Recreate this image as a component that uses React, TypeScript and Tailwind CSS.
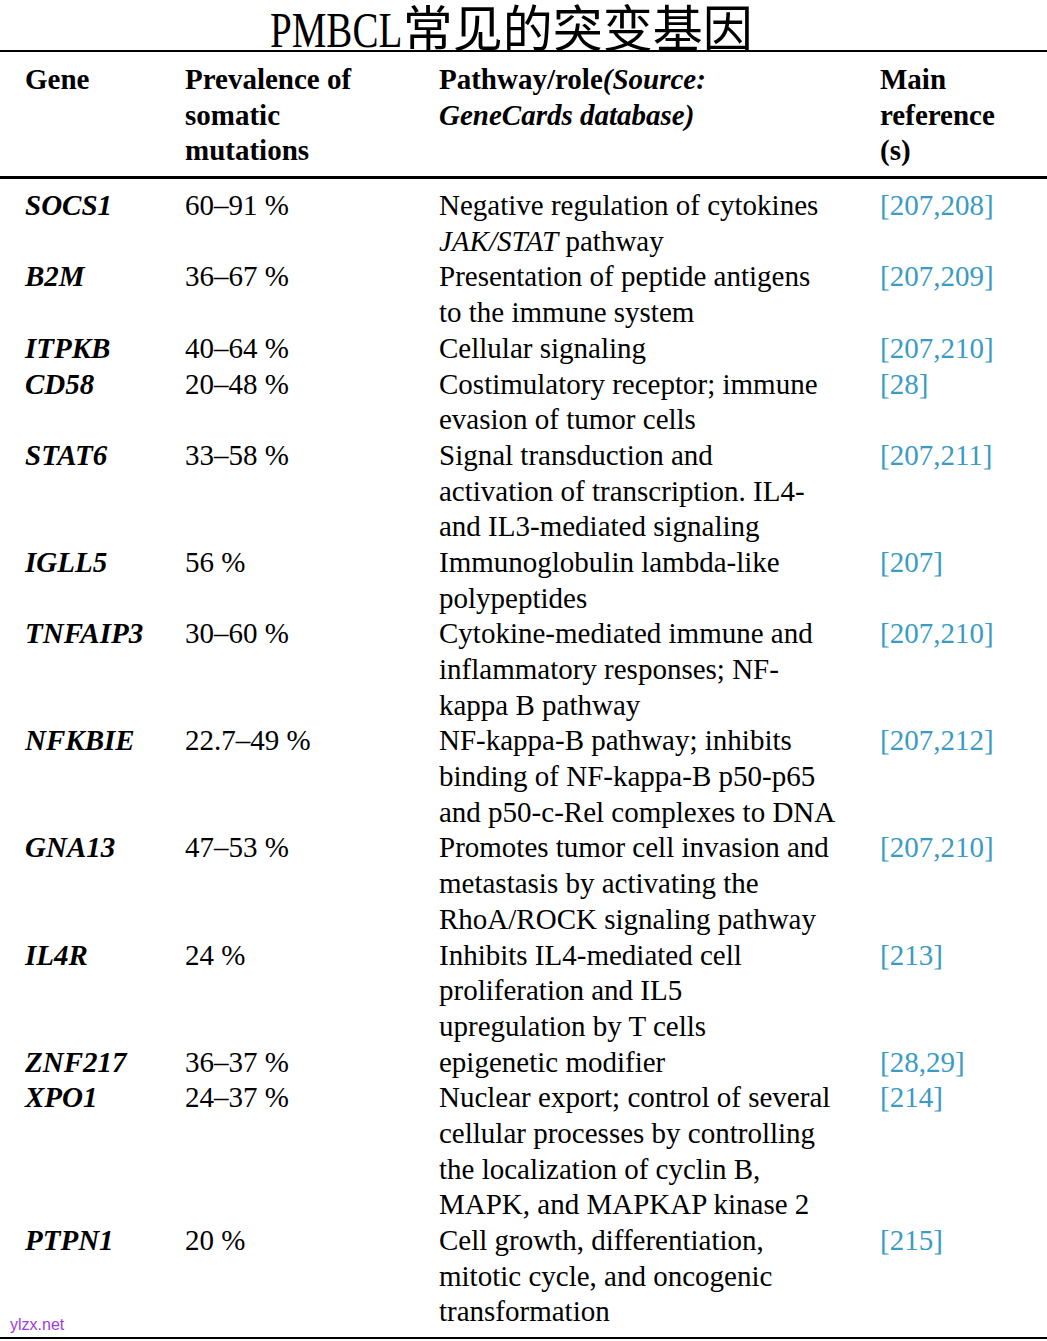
import React from 'react';

type Row = {
    gene: string;
    prevalence: string;
    pathway: React.ReactNode[];
    reference: string;
};

const rows: Row[] = [
    {
        gene: 'SOCS1',
        prevalence: '60–91 %',
        pathway: ['Negative regulation of cytokines', <><i>JAK/STAT</i> pathway</>],
        reference: '[207,208]',
    },
    {
        gene: 'B2M',
        prevalence: '36–67 %',
        pathway: ['Presentation of peptide antigens', 'to the immune system'],
        reference: '[207,209]',
    },
    { gene: 'ITPKB', prevalence: '40–64 %', pathway: ['Cellular signaling'], reference: '[207,210]' },
    {
        gene: 'CD58',
        prevalence: '20–48 %',
        pathway: ['Costimulatory receptor; immune', 'evasion of tumor cells'],
        reference: '[28]',
    },
    {
        gene: 'STAT6',
        prevalence: '33–58 %',
        pathway: ['Signal transduction and', 'activation of transcription. IL4-', 'and IL3-mediated signaling'],
        reference: '[207,211]',
    },
    {
        gene: 'IGLL5',
        prevalence: '56 %',
        pathway: ['Immunoglobulin lambda-like', 'polypeptides'],
        reference: '[207]',
    },
    {
        gene: 'TNFAIP3',
        prevalence: '30–60 %',
        pathway: ['Cytokine-mediated immune and', 'inflammatory responses; NF-', 'kappa B pathway'],
        reference: '[207,210]',
    },
    {
        gene: 'NFKBIE',
        prevalence: '22.7–49 %',
        pathway: ['NF-kappa-B pathway; inhibits', 'binding of NF-kappa-B p50-p65', 'and p50-c-Rel complexes to DNA'],
        reference: '[207,212]',
    },
    {
        gene: 'GNA13',
        prevalence: '47–53 %',
        pathway: ['Promotes tumor cell invasion and', 'metastasis by activating the', 'RhoA/ROCK signaling pathway'],
        reference: '[207,210]',
    },
    {
        gene: 'IL4R',
        prevalence: '24 %',
        pathway: ['Inhibits IL4-mediated cell', 'proliferation and IL5', 'upregulation by T cells'],
        reference: '[213]',
    },
    { gene: 'ZNF217', prevalence: '36–37 %', pathway: ['epigenetic modifier'], reference: '[28,29]' },
    {
        gene: 'XPO1',
        prevalence: '24–37 %',
        pathway: [
            'Nuclear export; control of several',
            'cellular processes by controlling',
            'the localization of cyclin B,',
            'MAPK, and MAPKAP kinase 2',
        ],
        reference: '[214]',
    },
    {
        gene: 'PTPN1',
        prevalence: '20 %',
        pathway: ['Cell growth, differentiation,', 'mitotic cycle, and oncogenic', 'transformation'],
        reference: '[215]',
    },
];

const cols = 'grid grid-cols-[185px_254px_441px_1fr]';

export default function App() {
    return (
        <div className="relative w-[1047px] h-[1341px] bg-white text-black overflow-hidden">
            {/* title */}
            <h1 className="h-[50px] pr-[24px] text-center text-[50px] leading-[50px] font-normal whitespace-nowrap">
                <span className="inline-block origin-left scale-x-[0.78] mr-[-37px] font-['Liberation_Serif',serif]">
                    PMBCL
                </span>
                <span className="font-['Noto_Sans_CJK_SC',sans-serif]">常见的突变基因</span>
            </h1>

            <div className="border-t-2 border-black font-['Liberation_Serif',serif] text-[29px] leading-[35.68px]">
                {/* header */}
                <div className={`${cols} font-bold pt-[10px] pb-[7px] border-b-[3px] border-black`}>
                    <div className="pl-[25px]">Gene</div>
                    <div>
                        Prevalence of
                        <br />
                        somatic
                        <br />
                        mutations
                    </div>
                    <div>
                        Pathway/role<i>(Source:</i>
                        <br />
                        <i>GeneCards database)</i>
                    </div>
                    <div>
                        Main
                        <br />
                        reference
                        <br />
                        (s)
                    </div>
                </div>

                {/* body */}
                <div className="pt-[9px] pb-[7px] border-b-2 border-black">
                    {rows.map((row) => (
                        <div key={row.gene} className={cols}>
                            <div className="pl-[25px] font-bold italic">{row.gene}</div>
                            <div>{row.prevalence}</div>
                            <div className="whitespace-nowrap">
                                {row.pathway.map((line, i) => (
                                    <div key={i}>{line}</div>
                                ))}
                            </div>
                            <div className="text-[#3a9bc4]">{row.reference}</div>
                        </div>
                    ))}
                </div>
            </div>

            <span className="absolute left-[10px] top-[1315px] text-[16px] leading-[20px] text-[#a03be0] font-['Liberation_Sans',sans-serif]">
                ylzx.net
            </span>
        </div>
    );
}
